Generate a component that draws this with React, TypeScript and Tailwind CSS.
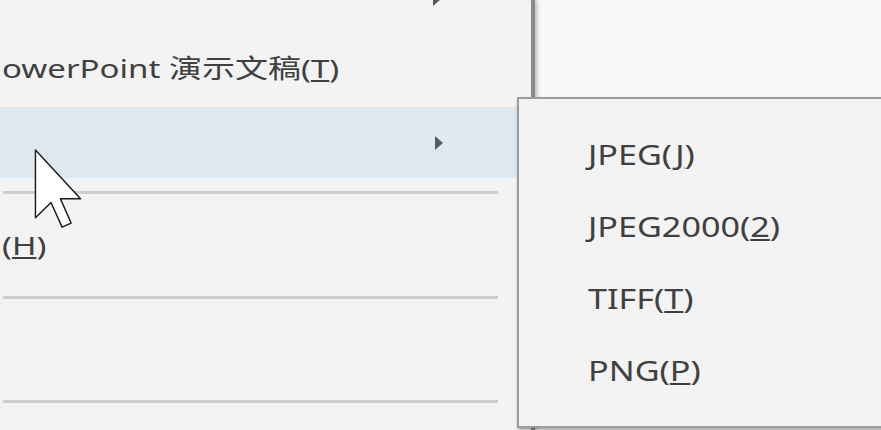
import React from 'react';

const font = { fontFamily: '"Noto Sans", "Noto Sans CJK SC", sans-serif' };

const Arrow = () => (
    <svg width="10" height="14" viewBox="0 0 10 14" className="text-[#5a5a5a]">
        <path d="M1 0 L9 7 L1 14 Z" fill="currentColor" />
    </svg>
);

const Separator = () => <div className="ml-[3px] mr-[33px] h-[3px] bg-[#cdcdcd]" />;

const Cursor = () => (
    <svg
        width="50"
        height="82"
        viewBox="0 0 12 20"
        className="absolute left-[33px] top-[148px]"
    >
        <path
            d="M0.5 0.5 L0.5 17 L4.3 13.3 L7 19.3 L9.2 18.3 L6.6 12.4 L11.5 12.4 Z"
            fill="#ffffff"
            stroke="#1a1a1a"
            strokeWidth="0.35"
            strokeLinejoin="round"
        />
    </svg>
);

const SubItem = ({ label, hotkey }: { label: string; hotkey: string }) => (
    <div className="h-[72px] flex items-center pl-[69px] text-[28px] text-[#404040]">
        <span className="inline-block origin-left scale-x-[1.22] whitespace-nowrap">
            {label}(<span className="underline underline-offset-2">{hotkey}</span>)
        </span>
    </div>
);

const App = () => {
    return (
        <div className="relative w-[881px] h-[430px] overflow-hidden bg-[#f9f9f9] select-none" style={font}>
            <div className="w-[535px] h-full bg-[#f3f3f3] border-r-[4px] border-[#8a8a8a] flex flex-col shadow-[2px_0_4px_rgba(0,0,0,0.25)]">
                <div className="h-[36px] flex items-start">
                    <div className="ml-[432px] -mt-[8px]">
                        <Arrow />
                    </div>
                </div>
                <div className="h-[71px] flex items-center pl-[2px] pb-[7px] text-[26px] text-[#404040]">
                    <span className="inline-block origin-left scale-x-[1.27] whitespace-nowrap">
                        owerPoint 演示文稿(<span className="underline underline-offset-2">T</span>)
                    </span>
                </div>
                <div className="h-[71px] flex items-center bg-[#dfe9f2]">
                    <div className="ml-[434px]">
                        <Arrow />
                    </div>
                </div>
                <div className="h-[13px]" />
                <Separator />
                <div className="h-[102px] flex items-center pl-[2px] text-[26px] text-[#404040]">
                    <span className="inline-block origin-left scale-x-[1.27]">
                        (<span className="underline underline-offset-2">H</span>)
                    </span>
                </div>
                <Separator />
                <div className="h-[101px]" />
                <Separator />
            </div>

            <Cursor />

            <div className="absolute left-[517px] top-[97px] w-[400px] h-[331px] bg-[#f3f3f3] border-2 border-[#9c9c9c] shadow-[1px_2px_3px_rgba(0,0,0,0.35)] pt-[19px]">
                <SubItem label="JPEG" hotkey="J" />
                <SubItem label="JPEG2000" hotkey="2" />
                <SubItem label="TIFF" hotkey="T" />
                <SubItem label="PNG" hotkey="P" />
            </div>
        </div>
    );
};

export default App;
